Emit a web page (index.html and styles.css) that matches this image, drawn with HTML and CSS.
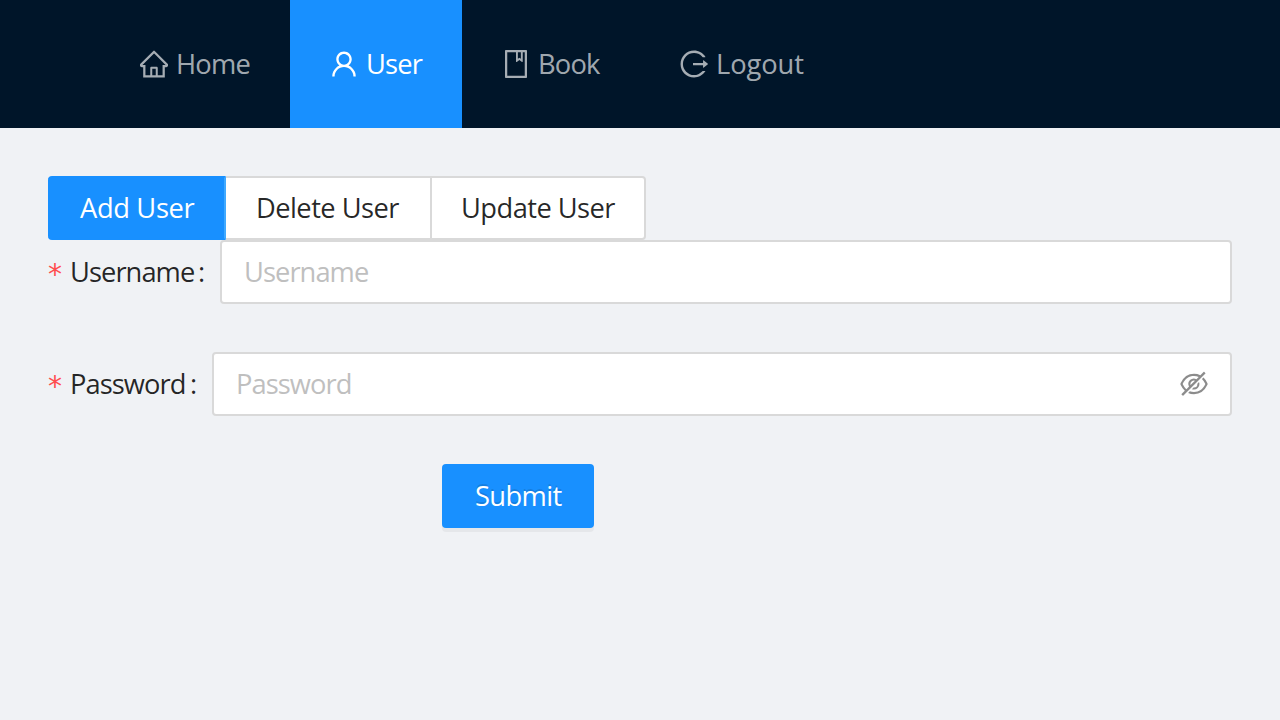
FILE: index.html
```
<!DOCTYPE html>
<html lang="en">
<head>
<meta charset="utf-8">
<title>Add User</title>
<link rel="stylesheet" href="styles.css">
</head>
<body>
<header class="navbar">
  <a class="nav-item"><svg class="icon" viewBox="64 64 896 896"><path d="M946.5 505L560.1 118.8l-25.9-25.9a31.5 31.5 0 00-44.4 0L77.5 505a63.9 63.9 0 00-18.8 46c.4 35.2 29.7 63.3 64.9 63.3h42.5V940h691.8V614.3h43.4c17.1 0 33.2-6.7 45.3-18.8a63.6 63.6 0 0018.7-45.3c0-17-6.7-33.1-18.8-45.2zM568 868H456V664h112v204zm217.9-325.7V868H632V640c0-22.1-17.9-40-40-40H432c-22.1 0-40 17.9-40 40v228H238.1V542.3h-96l370-369.7 23.1 23.1L882 542.3h-96.1z"/></svg><span class="label-home">Home</span></a>
  <a class="nav-item active"><svg class="icon" viewBox="64 64 896 896"><path d="M858.5 763.6a374 374 0 00-80.6-119.5 375.63 375.63 0 00-119.5-80.6c-.4-.2-.8-.3-1.2-.5C719.5 518 760 444.7 760 362c0-137-111-248-248-248S264 225 264 362c0 82.7 40.5 156 102.8 201.1-.4.2-.8.3-1.2.5-44.8 18.9-85 46-119.5 80.6a375.63 375.63 0 00-80.6 119.5A371.7 371.7 0 00136 901.8a8 8 0 008 8.2h60c4.4 0 7.9-3.5 8-7.8 2-77.2 33-149.5 87.8-204.3 56.7-56.7 132-87.9 212.2-87.9s155.5 31.2 212.2 87.9C779 752.7 810 825 812 902.2c.1 4.4 3.6 7.8 8 7.8h60a8 8 0 008-8.2c-1-47.8-10.9-94.3-29.5-138.2zM512 534c-45.9 0-89.1-17.9-121.6-50.4S340 407.9 340 362c0-45.9 17.9-89.1 50.4-121.6S466.1 190 512 190s89.1 17.9 121.6 50.4S684 316.1 684 362c0 45.9-17.9 89.1-50.4 121.6S557.9 534 512 534z"/></svg><span class="label-user">User</span></a>
  <a class="nav-item"><svg class="icon" viewBox="64 64 896 896"><path d="M832 64H192c-17.7 0-32 14.3-32 32v832c0 17.7 14.3 32 32 32h640c17.7 0 32-14.3 32-32V96c0-17.7-14.3-32-32-32zm-260 72h96v209.9L621.5 312 572 347.4V136zm220 752H232V136h280v296.9c0 3.3 1 6.6 3 9.3a15.9 15.9 0 0022.3 3.7l83.8-59.9 81.4 59.4c2.7 2 6 3.1 9.4 3.1 8.8 0 16-7.2 16-16V136h64v752z"/></svg><span class="label-book">Book</span></a>
  <a class="nav-item"><svg class="icon" viewBox="64 64 896 896"><path d="M868 732h-70.3c-4.8 0-9.3 2.1-12.3 5.8-7 8.5-14.5 16.7-22.4 24.5a353.84 353.84 0 01-112.7 75.9A352.8 352.8 0 01512.4 866c-47.9 0-94.3-9.4-137.9-27.8a353.84 353.84 0 01-112.7-75.9 353.28 353.28 0 01-76-112.5C167.3 606.2 158 559.9 158 512s9.4-94.2 27.8-137.8c17.8-42.1 43.4-80 76-112.5s70.5-58.1 112.7-75.9c43.6-18.4 90-27.8 137.9-27.8 47.9 0 94.3 9.3 137.9 27.8 42.2 17.8 80.1 43.4 112.7 75.9 7.9 7.9 15.3 16.1 22.4 24.5 3 3.7 7.6 5.8 12.3 5.8H868c6.3 0 10.2-7 6.7-12.3C798 160.5 663.8 81.6 511.3 82 271.7 82.6 79.6 277.1 82 516.4 84.4 751.9 276.2 942 512.4 942c152.1 0 285.7-78.8 362.3-197.7 3.4-5.3-.4-12.3-6.7-12.3zm88.9-226.3L815 393.7c-5.3-4.2-13-.4-13 6.3v76H488c-4.4 0-8 3.6-8 8v56c0 4.4 3.6 8 8 8h314v76c0 6.7 7.8 10.5 13 6.3l141.9-112a8 8 0 000-12.6z"/></svg><span class="label-logout">Logout</span></a>
</header>
<main class="content">
  <div class="tabs">
    <div class="tab tab-add selected"><span>Add User</span></div>
    <div class="tab tab-delete"><span>Delete User</span></div>
    <div class="tab tab-update"><span>Update User</span></div>
  </div>
  <form class="form">
    <div class="row">
      <label class="label label-username"><span class="required">*</span><span class="name">Username</span><span class="colon">:</span></label>
      <div class="field"><span class="placeholder">Username</span></div>
    </div>
    <div class="row">
      <label class="label label-password"><span class="required">*</span><span class="name">Password</span><span class="colon">:</span></label>
      <div class="field"><span class="placeholder">Password</span><svg class="icon eye" viewBox="64 64 896 896"><path d="M942.2 486.2Q889.47 375.11 816.7 305l-50.88 50.88C807.31 395.53 843.45 447.4 874.7 512 791.5 684.2 673.4 766 512 766q-72.67 0-133.87-22.38L323 798.75Q408 838 512 838q288.3 0 430.2-300.3a60.29 60.29 0 000-51.5zm-63.57-320.64L836 122.88a8 8 0 00-11.32 0L715.31 232.2Q624.86 186 512 186q-288.3 0-430.2 300.3a60.3 60.3 0 000 51.5q56.69 119.4 136.5 191.41L112.48 835a8 8 0 000 11.31L155.17 889a8 8 0 0011.31 0l712.15-712.12a8 8 0 000-11.32zM149.3 512C232.6 339.8 350.7 258 512 258c54.54 0 104.13 9.36 149.12 28.39l-70.3 70.3a176 176 0 00-238.13 238.13l-83.42 83.42C223.1 637.49 183.3 582.28 149.3 512zm246.7 0a112.11 112.11 0 01146.2-106.69L401.31 546.2A112 112 0 01396 512z"/><path d="M508 624c-3.46 0-6.87-.16-10.25-.47l-52.82 52.82a176.09 176.09 0 00227.42-227.42l-52.82 52.82c.31 3.38.47 6.79.47 10.25a111.94 111.94 0 01-112 112z"/></svg></div>
    </div>
    <div class="submit"><span>Submit</span></div>
  </form>
</main>
</body>
</html>
```
FILE: styles.css
```
* { box-sizing: border-box; }
body {
  margin: 0;
  height: 720px;
  overflow: hidden;
  background: #f0f2f5;
  color: rgba(0, 0, 0, 0.85);
  font: 27.3px/40px "Open Sans", "Noto Sans", sans-serif;
  white-space: nowrap;
}
.icon { width: 28px; height: 28px; flex: none; fill: currentColor; }
.navbar {
  display: flex;
  height: 128px;
  padding-left: 100px;
  background: #001529;
}
.nav-item {
  display: flex;
  align-items: center;
  gap: 8px;
  padding: 0 40px;
  color: rgba(255, 255, 255, 0.65);
}
.nav-item.active { background: #1890ff; color: #fff; }
.label-home { width: 74px; letter-spacing: -0.8px; }
.label-user { width: 56px; letter-spacing: -0.8px; }
.label-book { width: 62px; letter-spacing: -0.8px; }
.label-logout { width: 88px; letter-spacing: -0.1px; }
.content { padding: 48px; }
.tabs { display: flex; height: 64px; }
.tab {
  display: flex;
  align-items: center;
  border: 2px solid #d9d9d9;
  border-left: 0;
  background: #fff;
  letter-spacing: -0.55px;
}
.tab-add { width: 178px; padding-left: 32px; border-radius: 4px 0 0 4px; letter-spacing: -0.35px; }
.tab-delete { width: 206px; padding-left: 30px; }
.tab-update { width: 214px; padding-left: 29px; border-radius: 0 4px 4px 0; }
.tab.selected {
  border-color: #1890ff;
  border-right-color: #40a9ff;
  background: #1890ff;
  color: #fff;
}
.form { display: flex; flex-direction: column; gap: 48px; }
.row { display: flex; height: 64px; }
.label { display: flex; flex: none; align-items: center; }
.label-username { width: 172px; }
.label-password { width: 164px; }
.required { width: 22px; padding-top: 6px; color: #ff4d4f; font-family: "DejaVu Sans", sans-serif; font-size: 28px; }
.name, .placeholder { letter-spacing: -0.95px; }
.label-username .name { width: 128px; }
.label-password .name { width: 120px; }
.field {
  display: flex;
  flex: 1;
  align-items: center;
  justify-content: space-between;
  padding: 0 22px;
  border: 2px solid #d9d9d9;
  border-radius: 4px;
  background: #fff;
}
.placeholder { color: #bfbfbf; }
.eye { color: rgba(0, 0, 0, 0.45); }
.submit {
  display: flex;
  align-items: center;
  width: 152px;
  height: 64px;
  margin-left: 394px;
  padding-left: 33px;
  border-radius: 4px;
  background: #1890ff;
  box-shadow: 0 4px 0 rgba(0, 0, 0, 0.045);
  color: #fff;
  letter-spacing: -0.6px;
  text-shadow: 0 -2px 0 rgba(0, 0, 0, 0.12);
}
```
